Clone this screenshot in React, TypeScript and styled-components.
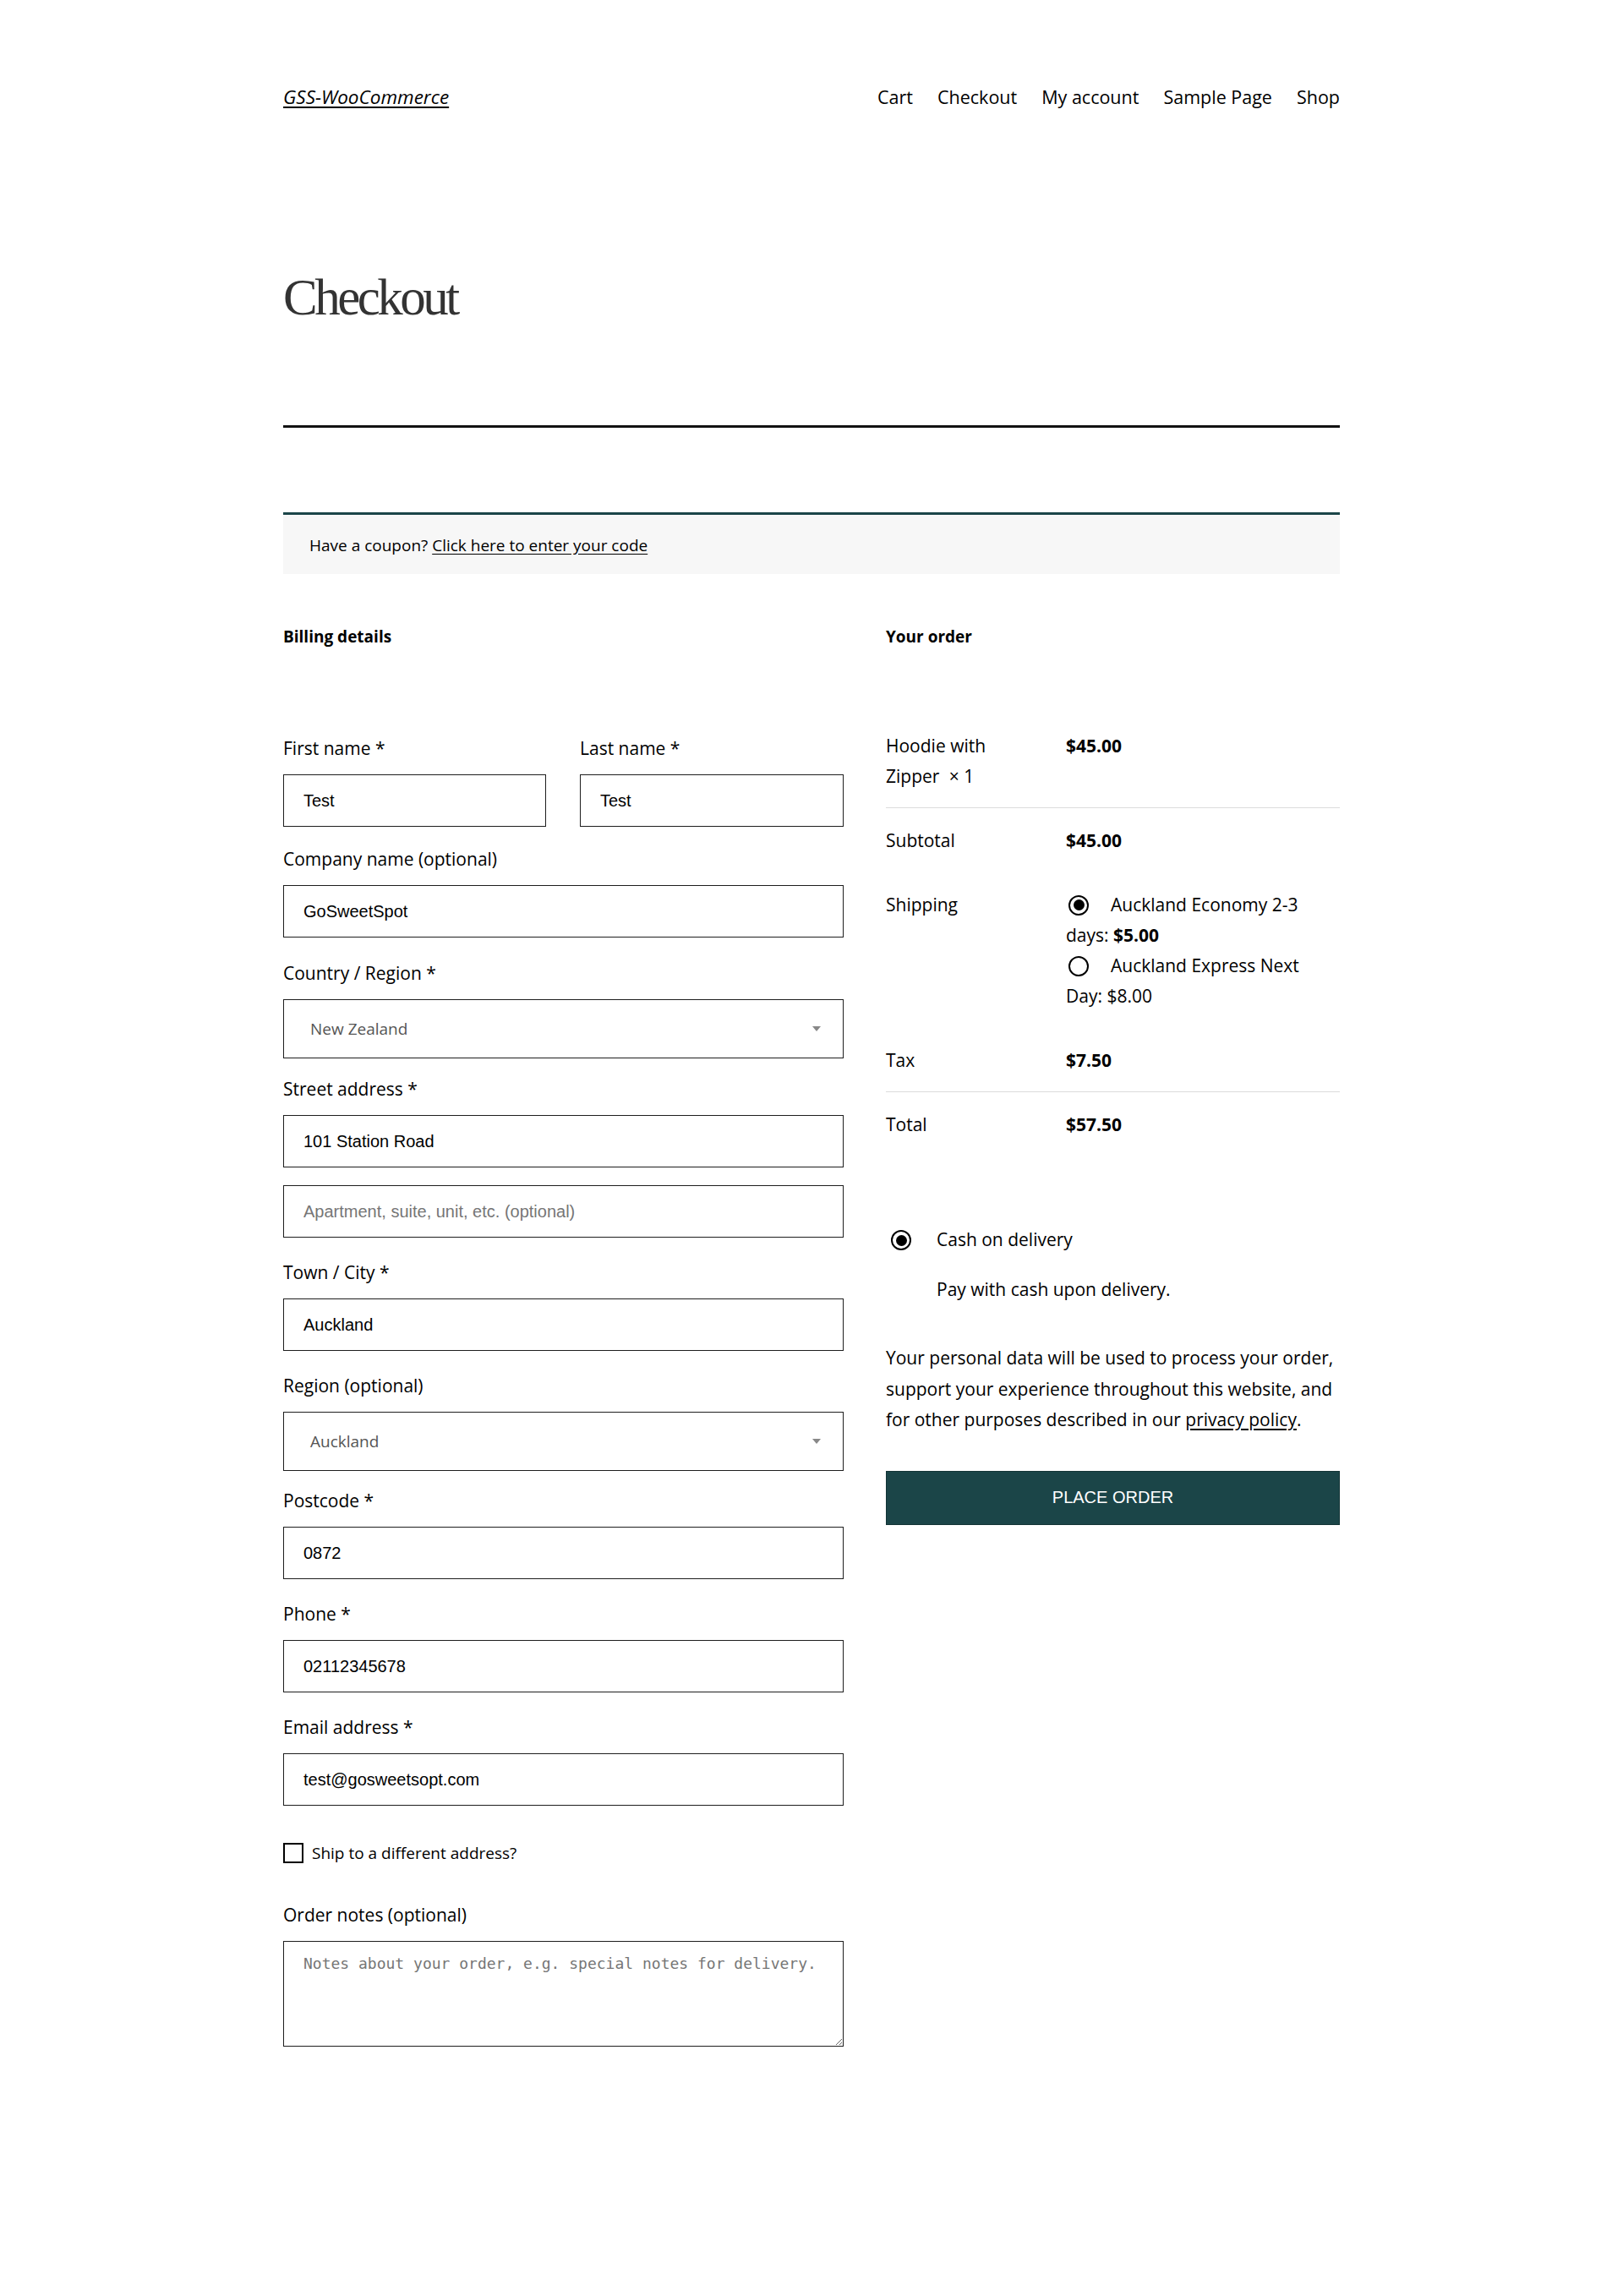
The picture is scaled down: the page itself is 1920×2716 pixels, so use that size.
import styled, { createGlobalStyle } from 'styled-components';

const GlobalStyle = createGlobalStyle`
  body {
    margin: 0;
    background: #ffffff;
    color: #000000;
    font-family: 'Open Sans', 'Noto Sans', sans-serif;
    font-size: 21px;
  }
  * {
    box-sizing: border-box;
  }
`;

const billingFields = [
  { label: 'Company name (optional)', value: 'GoSweetSpot', gap: 27 },
  { label: 'Country / Region *', value: 'New Zealand', select: true, gap: 21 },
];

const lowerFields = [
  { label: 'Region (optional)', value: 'Auckland', select: true, gap: 20 },
  { label: 'Postcode *', value: '0872', gap: 26 },
  { label: 'Phone *', value: '02112345678', gap: 26 },
  { label: 'Email address *', value: 'test@gosweetsopt.com', gap: 26 },
];

export default function App() {
  return (
    <>
      <GlobalStyle />
      <Page>
        <Header>
          <Logo href="#">GSS-WooCommerce</Logo>
          <Nav>
            <NavLink href="#">Cart</NavLink>
            <NavLink href="#">Checkout</NavLink>
            <NavLink href="#">My account</NavLink>
            <NavLink href="#">Sample Page</NavLink>
            <NavLink href="#">Shop</NavLink>
          </Nav>
        </Header>

        <PageTitle>Checkout</PageTitle>
        <Divider />

        <CouponBox>
          Have a coupon? <TextLink href="#">Click here to enter your code</TextLink>
        </CouponBox>

        <Columns>
          <Column>
            <SectionTitle>Billing details</SectionTitle>
            <FormBody>
              <NameRow>
                <Field $gap={23}>
                  <Label>First name *</Label>
                  <TextInput defaultValue="Test" />
                </Field>
                <Field $gap={23}>
                  <Label>Last name *</Label>
                  <TextInput defaultValue="Test" />
                </Field>
              </NameRow>

              {billingFields.map((f) => (
                <Field key={f.label} $gap={f.gap}>
                  <Label>{f.label}</Label>
                  {f.select ? (
                    <SelectBox>
                      {f.value}
                      <Caret />
                    </SelectBox>
                  ) : (
                    <TextInput defaultValue={f.value} />
                  )}
                </Field>
              ))}

              <Field $gap={26}>
                <Label>Street address *</Label>
                <TextInput defaultValue="101 Station Road" />
                <SecondInput placeholder="Apartment, suite, unit, etc. (optional)" />
              </Field>

              <Field $gap={26}>
                <Label>Town / City *</Label>
                <TextInput defaultValue="Auckland" />
              </Field>

              {lowerFields.map((f) => (
                <Field key={f.label} $gap={f.gap}>
                  <Label>{f.label}</Label>
                  {f.select ? (
                    <SelectBox>
                      {f.value}
                      <Caret />
                    </SelectBox>
                  ) : (
                    <TextInput defaultValue={f.value} />
                  )}
                </Field>
              ))}

              <CheckRow>
                <CheckBox />
                Ship to a different address?
              </CheckRow>

              <Field $gap={0}>
                <Label>Order notes (optional)</Label>
                <Notes placeholder="Notes about your order, e.g. special notes for delivery." />
              </Field>
            </FormBody>
          </Column>

          <Column>
            <SectionTitle>Your order</SectionTitle>
            <OrderTable>
              <OrderRow $line>
                <OrderLabel>
                  Hoodie with
                  <br />
                  Zipper <Qty>× 1</Qty>
                </OrderLabel>
                <OrderValue>$45.00</OrderValue>
              </OrderRow>
              <OrderRow>
                <OrderLabel>Subtotal</OrderLabel>
                <OrderValue>$45.00</OrderValue>
              </OrderRow>
              <OrderRow>
                <OrderLabel>Shipping</OrderLabel>
                <ShippingCell>
                  <Radio $checked $left={3} $right={26} />
                  Auckland Economy 2-3
                  <br />
                  days: <strong>$5.00</strong>
                  <br />
                  <Radio $left={3} $right={26} />
                  Auckland Express Next
                  <br />
                  Day: $8.00
                </ShippingCell>
              </OrderRow>
              <OrderRow $line>
                <OrderLabel>Tax</OrderLabel>
                <OrderValue>$7.50</OrderValue>
              </OrderRow>
              <OrderRow>
                <OrderLabel>Total</OrderLabel>
                <OrderValue>$57.50</OrderValue>
              </OrderRow>
            </OrderTable>

            <Payment>
              <PaymentMethod>
                <Radio $checked $left={6} $right={30} />
                Cash on delivery
              </PaymentMethod>
              <PaymentNote>Pay with cash upon delivery.</PaymentNote>
            </Payment>

            <Privacy>
              Your personal data will be used to process your order,
              <br />
              support your experience throughout this website, and
              <br />
              for other purposes described in our <TextLink href="#">privacy policy</TextLink>.
            </Privacy>

            <PlaceOrder type="button">PLACE ORDER</PlaceOrder>
          </Column>
        </Columns>
      </Page>
    </>
  );
}

const Page = styled.div`
  width: 1250px;
  margin: 0 auto;
  padding-bottom: 295px;
`;

const Header = styled.header`
  margin-top: 98px;
  height: 32px;
  display: flex;
  align-items: center;
  justify-content: space-between;
`;

const Logo = styled.a`
  color: #000;
  font-size: 22.5px;
  font-style: italic;
  text-decoration: underline;
  text-underline-offset: 3px;
`;

const Nav = styled.nav`
  display: flex;
  gap: 29px;
`;

const NavLink = styled.a`
  color: #000;
  font-size: 21.5px;
  text-decoration: none;
`;

const PageTitle = styled.h1`
  margin: 185px 0 0;
  font-family: 'Liberation Serif', 'DejaVu Serif', serif;
  font-weight: 400;
  font-size: 61px;
  line-height: 74px;
  letter-spacing: -3.5px;
  color: #333;
`;

const Divider = styled.hr`
  margin: 114px 0 0;
  border: none;
  height: 3px;
  background: #111;
`;

const CouponBox = styled.div`
  margin-top: 100px;
  padding: 21px 31px 19px;
  border-top: 3px solid #1b4548;
  background: #f7f7f7;
  font-size: 19px;
  line-height: 30px;
`;

const TextLink = styled.a`
  color: #000;
  text-decoration: underline;
  text-underline-offset: 3px;
`;

const Columns = styled.div`
  margin-top: 60px;
  display: grid;
  grid-template-columns: 663px 537px;
  column-gap: 50px;
`;

const Column = styled.section`
  display: flex;
  flex-direction: column;
`;

const SectionTitle = styled.h3`
  margin: 0;
  font-size: 19px;
  line-height: 28px;
  font-weight: 700;
`;

const FormBody = styled.div`
  margin-top: 103px;
`;

const NameRow = styled.div`
  display: grid;
  grid-template-columns: 311px 312px;
  column-gap: 40px;
`;

const Field = styled.div<{ $gap: number }>`
  display: flex;
  flex-direction: column;
  margin-bottom: ${(p) => p.$gap}px;
`;

const Label = styled.label`
  font-size: 21px;
  line-height: 30px;
  margin-bottom: 16px;
`;

const TextInput = styled.input`
  height: 62px;
  width: 100%;
  padding: 0 23px;
  border: 1px solid #1e1e1e;
  border-radius: 0;
  font-family: 'Liberation Sans', Arial, sans-serif;
  font-size: 20px;
  color: #000;
  background: #fff;

  &::placeholder {
    color: #767676;
  }
`;

const SecondInput = styled(TextInput)`
  margin-top: 21px;
`;

const SelectBox = styled.div`
  position: relative;
  height: 70px;
  padding: 0 31px;
  display: flex;
  align-items: center;
  border: 1px solid #1e1e1e;
  font-size: 19px;
  color: #555;
`;

const Caret = styled.span`
  position: absolute;
  right: 26px;
  top: 31px;
  width: 0;
  height: 0;
  border-left: 5px solid transparent;
  border-right: 5px solid transparent;
  border-top: 6px solid #888;
`;

const CheckRow = styled.label`
  display: flex;
  align-items: center;
  gap: 10px;
  margin-top: 41px;
  margin-bottom: 43px;
  font-size: 19px;
  line-height: 30px;
`;

const CheckBox = styled.span`
  width: 24px;
  height: 24px;
  border: 2px solid #000;
`;

const Notes = styled.textarea`
  height: 125px;
  width: 100%;
  padding: 12px 23px;
  border: 1px solid #1e1e1e;
  border-radius: 0;
  font-family: 'DejaVu Sans Mono', 'Liberation Mono', monospace;
  font-size: 18px;
  line-height: 28px;

  &::placeholder {
    color: #767676;
  }
`;

const OrderTable = styled.div`
  margin-top: 77px;
`;

const OrderRow = styled.div<{ $line?: boolean }>`
  display: grid;
  grid-template-columns: 213px 1fr;
  padding: 19.5px 0;
  border-bottom: 1px solid ${(p) => (p.$line ? '#dcdcdc' : 'transparent')};
  line-height: 36px;
`;

const OrderLabel = styled.div`
  font-size: 21px;
`;

const Qty = styled.span`
  margin-left: 6px;
`;

const OrderValue = styled.div`
  font-size: 21px;
  font-weight: 700;
`;

const ShippingCell = styled.div`
  font-size: 21px;
`;

const Radio = styled.span<{ $checked?: boolean; $left: number; $right: number }>`
  position: relative;
  display: inline-block;
  width: 24px;
  height: 24px;
  margin: 0 ${(p) => p.$right}px 0 ${(p) => p.$left}px;
  border: 2.5px solid #000;
  border-radius: 50%;
  vertical-align: -5px;

  &::after {
    content: '';
    display: ${(p) => (p.$checked ? 'block' : 'none')};
    position: absolute;
    inset: 3.5px;
    border-radius: 50%;
    background: #000;
  }
`;

const Payment = styled.div`
  margin-top: 80px;
`;

const PaymentMethod = styled.div`
  font-size: 21px;
  line-height: 36px;
`;

const PaymentNote = styled.p`
  margin: 23px 0 0 60px;
  font-size: 21px;
  line-height: 36px;
`;

const Privacy = styled.p`
  margin: 45px 0 0;
  font-size: 21px;
  line-height: 36.5px;
  white-space: nowrap;
`;

const PlaceOrder = styled.button`
  margin-top: 42px;
  height: 64px;
  width: 100%;
  border: 1px solid #133436;
  background: #1b4548;
  color: #fff;
  font-family: 'Liberation Sans', Arial, sans-serif;
  font-size: 20px;
  cursor: pointer;
`;
